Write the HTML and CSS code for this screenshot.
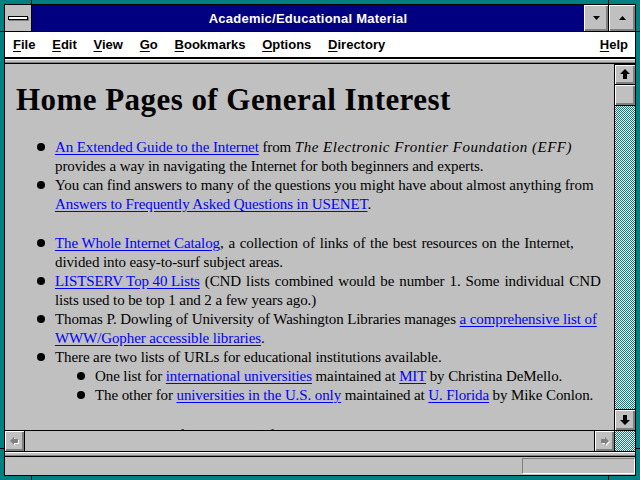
FILE: index.html
```html
<!DOCTYPE html>
<html>
<head>
<meta charset="utf-8">
<title>Academic/Educational Material</title>
<link rel="stylesheet" href="styles.css">
</head>
<body>
<div class="window">
  <div class="frame">
    <div class="titlebar">
      <div class="sysmenu"><div class="sysbar"></div></div>
      <div class="title">Academic/Educational Material</div>
      <div class="tbtn"><svg width="7" height="4" viewBox="0 0 7 4"><polygon points="0,0 7,0 3.5,4"/></svg></div>
      <div class="tbtn last"><svg width="7" height="4" viewBox="0 0 7 4"><polygon points="3.5,0 7,4 0,4"/></svg></div>
    </div>
    <div class="menubar">
      <span class="mi"><u>F</u>ile</span>
      <span class="mi"><u>E</u>dit</span>
      <span class="mi"><u>V</u>iew</span>
      <span class="mi"><u>G</u>o</span>
      <span class="mi"><u>B</u>ookmarks</span>
      <span class="mi"><u>O</u>ptions</span>
      <span class="mi"><u>D</u>irectory</span>
      <span class="mi help"><u>H</u>elp</span>
    </div>
    <div class="sep"></div>
    <div class="main">
      <div class="view">
        <div class="doc">
          <h1>Home Pages of General Interest</h1>
          <ul class="list">
            <li><a href="#">An Extended Guide to the Internet</a> from <i>The Electronic Frontier Foundation (EFF)</i><br>provides a way in navigating the Internet for both beginners and experts.</li>
            <li>You can find answers to many of the questions you might have about almost anything from<br><a href="#">Answers to Frequently Asked Questions in USENET</a>.</li>
          </ul>
          <ul class="list">
            <li><a href="#">The Whole Internet Catalog</a><span class="wide">, a collection of links of the best resources on the Internet,</span><br>divided into easy-to-surf subject areas.</li>
            <li><a href="#">LISTSERV Top 40 Lists</a><span class="wider"> (CND lists combined would be number 1. Some individual CND</span><br>lists used to be top 1 and 2 a few years ago.)</li>
            <li>Thomas P. Dowling of University of Washington Libraries manages <a href="#">a comprehensive list of<br>WWW/Gopher accessible libraries</a>.</li>
            <li>There are two lists of URLs for educational institutions available.
              <ul class="sub">
                <li>One list for <a href="#">international universities</a> maintained at <a href="#">MIT</a> by Christina DeMello.</li>
                <li>The other for <a href="#">universities in the U.S. only</a> maintained at <a href="#">U. Florida</a> by Mike Conlon.</li>
              </ul>
            </li>
          </ul>
          <ul class="list last">
            <li>Here are some lists of home pages of individual schools.</li>
          </ul>
        </div>
      </div>
      <div class="vscroll">
        <div class="sbtn up"><svg width="20" height="19" viewBox="0 0 20 19"><polygon points="10,4 15,9 12,9 12,14 8,14 8,9 5,9"/></svg></div>
        <div class="thumb"></div>
        <div class="track"></div>
        <div class="sbtn down"><svg width="20" height="20" viewBox="0 0 20 20"><polygon points="10,15 15,10 12,10 12,5 8,5 8,10 5,10"/></svg></div>
      </div>
    </div>
    <div class="hscroll">
      <div class="hbtn left"><svg width="19" height="20" viewBox="0 0 19 20"><polygon class="hl" points="6,11 10,7 10,9 14,9 14,13 10,13 10,15"/><polygon class="ar" points="5,10 9,6 9,8 13,8 13,12 9,12 9,14"/></svg></div>
      <div class="htrack"></div>
      <div class="hbtn right"><svg width="19" height="20" viewBox="0 0 19 20"><polygon class="hl" points="15,11 11,7 11,9 7,9 7,13 11,13 11,15"/><polygon class="ar" points="14,10 10,6 10,8 6,8 6,12 10,12 10,14"/></svg></div>
      <div class="corner"></div>
    </div>
    <div class="sep2"></div>
    <div class="status"><div class="statbox"></div></div>
  </div>
</div>
</body>
</html>
```
FILE: styles.css
```css
html, body {
  margin: 0;
  padding: 0;
  background: #008080;
}
.window {
  width: 640px;
  height: 480px;
  box-sizing: border-box;
  padding: 4px;
  background:
    linear-gradient(#000, #000) 31px 0 / 1px 100% no-repeat,
    linear-gradient(#000, #000) 608px 0 / 1px 100% no-repeat,
    linear-gradient(#000, #000) 0 31px / 100% 1px no-repeat,
    linear-gradient(#000, #000) 0 448px / 100% 1px no-repeat,
    #008080;
}
.frame {
  height: 100%;
  box-sizing: border-box;
  border: 1px solid #000;
  display: flex;
  flex-direction: column;
  background: #c0c0c0;
}
.titlebar {
  height: 26px;
  border-bottom: 1px solid #000;
  display: flex;
  flex: none;
}
.sysmenu {
  width: 26px;
  border-right: 1px solid #000;
  background: #c0c0c0;
  display: flex;
  align-items: center;
  justify-content: center;
}
.sysbar {
  width: 18px;
  height: 2px;
  background: #fff;
  border: 1px solid #000;
  box-shadow: 1px 1px 0 #808080;
  margin-top: -1px;
}
.title {
  flex: 1;
  background: #000080;
  color: #fff;
  font-family: "Liberation Sans", Arial, sans-serif;
  font-weight: bold;
  font-size: 13px;
  letter-spacing: 0.25px;
  display: flex;
  align-items: center;
  justify-content: center;
}
.tbtn {
  width: 24px;
  background: #c0c0c0;
  border-right: 1px solid #000;
  box-shadow: inset 1px 1px #fff, inset -1px -1px #808080, inset -2px -2px #808080;
  display: flex;
  align-items: center;
  justify-content: center;
}
.tbtn.last {
  width: 26px;
  border-right: 0;
}
.tbtn svg { fill: #000; }
.menubar {
  height: 25px;
  border-bottom: 2px solid #000;
  background: #fff;
  display: flex;
  align-items: center;
  flex: none;
  font-family: "Liberation Sans", Arial, sans-serif;
  font-weight: bold;
  font-size: 13px;
  color: #000;
}
.mi {
  padding: 0 8.4px;
}
.mi:first-child {
  padding-left: 8px;
}
.mi u {
  text-decoration-thickness: 1px;
  text-underline-offset: 2px;
}
.mi.help {
  margin-left: auto;
  padding-right: 7px;
}
.sep {
  height: 4px;
  border-bottom: 1px solid #000;
  background: #c0c0c0;
  box-shadow: inset 0 1px #fff, inset 0 -1px #808080;
  flex: none;
}
.main {
  height: 366px;
  display: flex;
  flex: none;
}
.view {
  flex: 1;
  overflow: hidden;
  background: #c0c0c0;
}
.doc {
  padding: 19px 4px 0 11px;
  font-family: "Liberation Serif", "Times New Roman", serif;
  font-size: 15px;
  line-height: 19px;
  letter-spacing: -0.1px;
  color: #000;
}
.doc h1 {
  margin: 0;
  font-size: 31px;
  line-height: 34px;
  letter-spacing: 0.45px;
  font-weight: bold;
}
.doc a {
  color: #0000ff;
  text-decoration: underline;
  text-underline-offset: 2px;
}
.doc i {
  letter-spacing: 0.5px;
}
.doc .wide {
  word-spacing: 1.1px;
}
.doc .wider {
  word-spacing: 1.4px;
}
.list {
  list-style: none;
  margin: 20px 0 0 0;
  padding-left: 39px;
}
.doc h1 + .list {
  margin-top: 21px;
}
.list.last {
  margin-top: 21px;
}
.list li {
  white-space: nowrap;
}
.list li::before {
  content: "";
  float: left;
  width: 8px;
  height: 8px;
  border-radius: 50%;
  background: #000;
  margin: 5px 0 0 -18px;
}
.sub {
  list-style: none;
  margin: 0;
  padding-left: 40px;
}
.vscroll {
  width: 20px;
  border-left: 1px solid #000;
  display: flex;
  flex-direction: column;
}
.sbtn, .thumb, .hbtn {
  background: #c0c0c0;
  box-shadow: inset 1px 1px #fff, inset -1px -1px #808080, inset -2px -2px #808080;
}
.sbtn svg { display: block; fill: #000; }
.up {
  height: 19px;
  border-top: 1px solid #000;
  border-bottom: 1px solid #000;
}
.thumb {
  height: 20px;
  border-bottom: 1px solid #000;
}
.track {
  flex: 1;
  background: repeating-conic-gradient(#008080 0 25%, #fff 0 50%) 0 0 / 2px 2px;
}
.down {
  height: 20px;
  border-top: 1px solid #000;
}
.hscroll {
  height: 20px;
  border-top: 1px solid #000;
  display: flex;
  flex: none;
}
.hbtn {
  width: 19px;
}
.hbtn svg { display: block; }
.hbtn .hl { fill: #fff; }
.hbtn .ar { fill: #808080; }
.hbtn.left { border-right: 1px solid #000; }
.hbtn.right { border-left: 1px solid #000; }
.htrack {
  flex: 1;
  background: #c0c0c0;
}
.corner {
  width: 20px;
  border-left: 1px solid #000;
  background: repeating-conic-gradient(#008080 0 25%, #fff 0 50%) 0 0 / 2px 2px;
}
.sep2 {
  height: 4px;
  border-top: 1px solid #000;
  border-bottom: 1px solid #000;
  background: #c0c0c0;
  box-shadow: inset 0 1px #fff, inset 0 -1px #808080;
  flex: none;
}
.status {
  flex: 1;
  display: flex;
  background: #c0c0c0;
}
.statbox {
  margin: 1px 0 0 auto;
  width: 111px;
  height: 14px;
  border: 1px solid;
  border-color: #808080 #fff #fff #808080;
}
```
